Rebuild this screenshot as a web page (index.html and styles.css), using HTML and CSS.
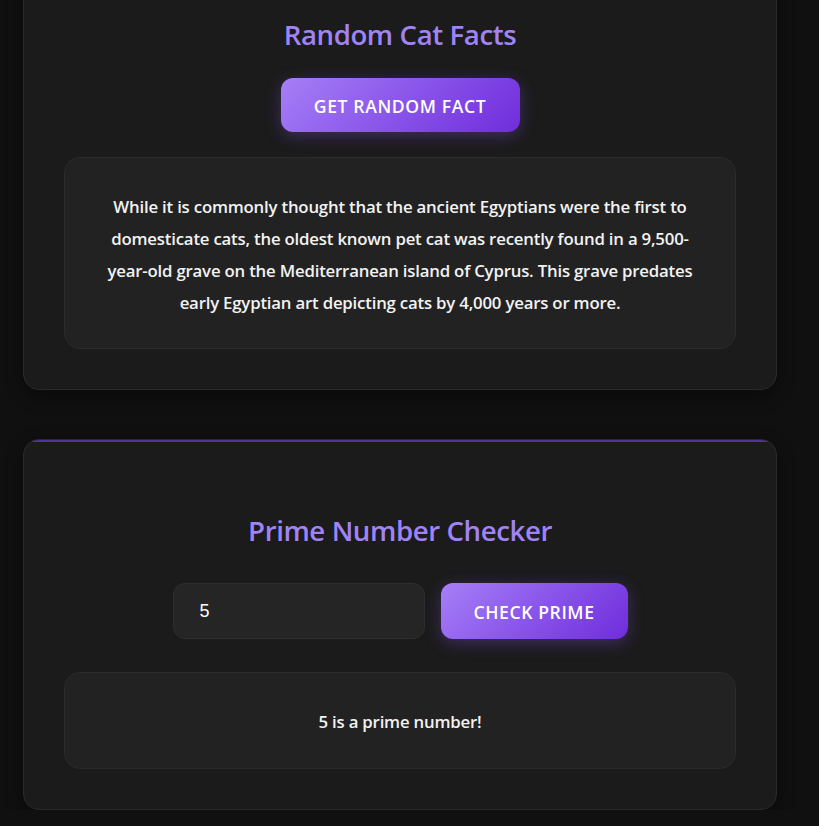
FILE: index.html
```html
<!DOCTYPE html>
<html lang="en">
<head>
<meta charset="utf-8">
<title>Random Cat Facts</title>
<link rel="stylesheet" href="styles.css">
</head>
<body>
<main class="page">
  <section class="card card-facts">
    <h2 class="card-title">Random Cat Facts</h2>
    <div class="actions">
      <button class="btn btn-fact" type="button">Get Random Fact</button>
    </div>
    <div class="result result-fact">
      <p>While it is commonly thought that the ancient Egyptians were the first to domesticate cats, the oldest known pet cat was recently found in a 9,500-year-old grave on the Mediterranean island of Cyprus. This grave predates early Egyptian art depicting cats by 4,000 years or more.</p>
    </div>
  </section>

  <section class="card card-prime">
    <h2 class="card-title">Prime Number Checker</h2>
    <div class="actions prime-row">
      <input class="num-input" type="text" value="5">
      <button class="btn btn-prime" type="button">Check Prime</button>
    </div>
    <div class="result result-prime">
      <p>5 is a prime number!</p>
    </div>
  </section>
</main>
</body>
</html>
```

FILE: styles.css
```css
* { box-sizing: border-box; }

html, body {
  margin: 0;
  background: #101010;
  overflow: hidden;
}

body {
  font-family: "Open Sans", "Noto Sans", sans-serif;
  color: #f0f0f0;
}

.page {
  width: 754px;
  margin: -25px 0 0 23px;
  display: flex;
  flex-direction: column;
  gap: 49px;
}

.card {
  position: relative;
  overflow: hidden;
  background: #1b1b1b;
  border: 1px solid #2a2a2a;
  border-radius: 16px;
  padding: 40px 40px 40px;
  box-shadow: 0 6px 18px rgba(0, 0, 0, 0.45);
}

.card-prime {
  padding-top: 72px;
}

.card-prime::before {
  content: "";
  position: absolute;
  left: 0;
  right: 0;
  top: 0;
  height: 2px;
  background: #4f32a0;
}

.card-title {
  margin: 0;
  text-align: center;
  font-size: 27.6px;
  line-height: 36px;
  font-weight: 600;
  color: #a084f5;
  letter-spacing: -0.4px;
}

.actions {
  display: flex;
  justify-content: center;
}

.card-facts .actions { margin-top: 26px; }
.card-prime .actions { margin-top: 35px; gap: 16px; }

.btn {
  border: none;
  border-radius: 12px;
  background: linear-gradient(135deg, #a67ff6 0%, #8a55ea 50%, #6f2ddb 100%);
  color: #fff;
  font-family: "Open Sans", "Noto Sans", sans-serif;
  font-weight: 600;
  font-size: 17.6px;
  letter-spacing: 0.6px;
  text-transform: uppercase;
  height: 54px;
  padding: 2px 0 0;
  box-shadow: 0 4px 16px rgba(130, 80, 230, 0.35);
  cursor: pointer;
}

.btn-fact { width: 239px; }
.btn-prime { width: 187px; height: 56px; }

.num-input {
  width: 252px;
  height: 56px;
  background: #252525;
  border: 1px solid #2e2e2e;
  border-radius: 12px;
  color: #fff;
  font-family: "Liberation Sans", Arial, sans-serif;
  font-size: 18px;
  padding: 0 24px 0 26px;
  outline: none;
}

.result {
  background: #222222;
  border: 1px solid #2b2b2b;
  border-radius: 16px;
  text-align: center;
  display: flex;
  align-items: center;
  justify-content: center;
}

.result p {
  margin: 0;
  font-weight: 600;
  font-size: 16.8px;
  line-height: 32px;
  color: #f2f2f2;
  letter-spacing: -0.2px;
}

.result-fact {
  margin-top: 25px;
  height: 192px;
  padding: 3px 28px 0;
}

.result-prime {
  margin-top: 33px;
  height: 97px;
  padding-top: 2px;
}
```
